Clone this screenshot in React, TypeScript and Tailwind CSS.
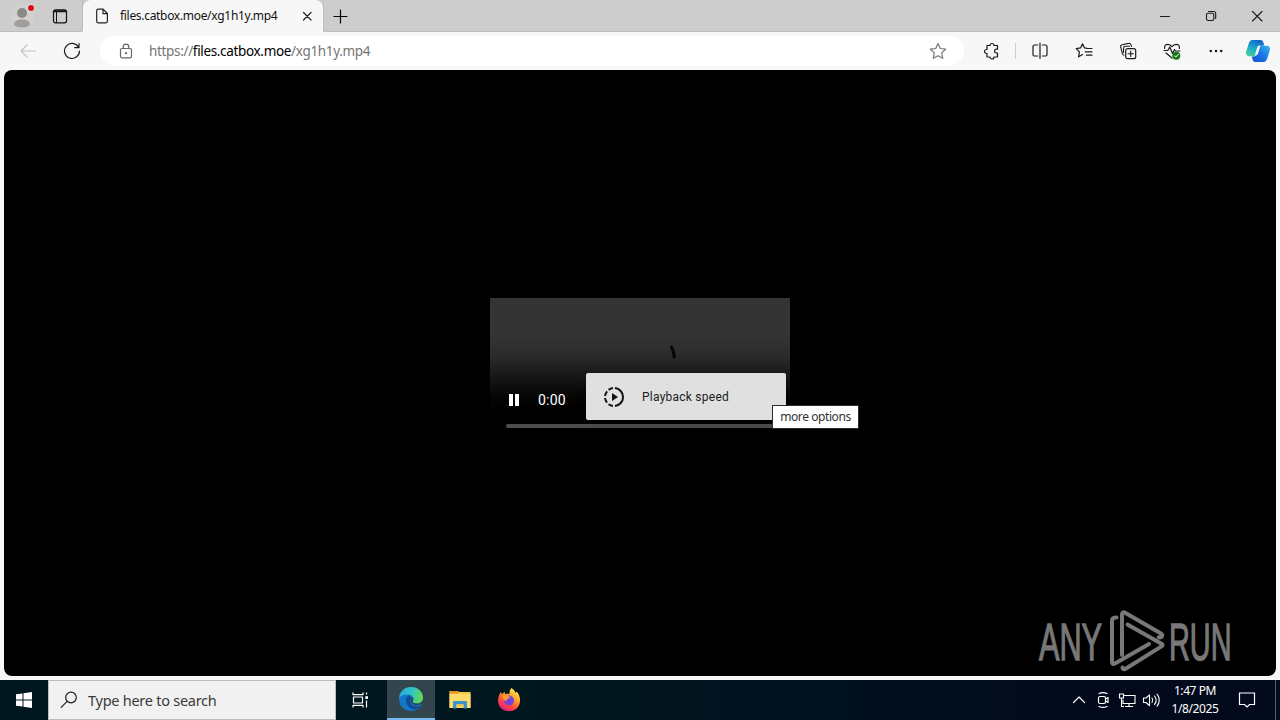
import type { ReactNode } from 'react';

type IconProps = {
  size?: number;
  className?: string;
  children: ReactNode;
};

// stroke icon, drawn 1:1 on a size x size grid
function Icon({ size = 18, className = 'text-[#1b1b1b]', children }: IconProps) {
  return (
    <svg
      width={size}
      height={size}
      viewBox={`0 0 ${size} ${size}`}
      fill="none"
      stroke="currentColor"
      strokeWidth="1.2"
      strokeLinecap="round"
      strokeLinejoin="round"
      className={`shrink-0 ${className}`}
    >
      {children}
    </svg>
  );
}

function Slot({ className = 'w-11', children }: { className?: string; children: ReactNode }) {
  return <div className={`flex h-full shrink-0 items-center justify-center ${className}`}>{children}</div>;
}

function TabStrip() {
  return (
    <div className="flex h-8 shrink-0 bg-[#cdcdcd]">
      <div className="flex w-[83px] items-center rounded-br border-b border-r border-[#bdbdbd]">
        <svg width="26" height="26" viewBox="0 0 26 26" className="ml-[9px]">
          <circle cx="13" cy="13" r="12" fill="#d3d1cf" />
          <circle cx="13" cy="10" r="5" fill="#8b8987" />
          <path d="M5 21.5c0-3 3-5 8-5s8 2 8 5c-2 2.4-4.500 3-8 3s-6-.6-8-3z" fill="#a09e9c" />
          <circle cx="22" cy="5" r="4.200" fill="#dcdcdc" />
          <circle cx="22" cy="5" r="3" fill="#d90f17" />
        </svg>
        <Icon size={16} className="ml-[17px] text-[#111]">
          <rect x="1.500" y="1.800" width="13" height="13" rx="2" />
          <path d="M2.500 3.200h11" strokeWidth="2" />
          <path d="M4.500 4v10.500" strokeWidth="1" />
        </Icon>
      </div>
      <div className="flex w-[240px] items-center rounded-t-lg bg-[#f7f7f7]">
        <Icon size={16} className="ml-[11px] text-[#222]">
          <path d="M4.200 1.200h4.900l4.300 4.300v7.800a1.500 1.500 0 0 1-1.500 1.500H4.200a1.500 1.500 0 0 1-1.500-1.500V2.700a1.500 1.500 0 0 1 1.500-1.500zM9 1.500v4.200h4.200" />
        </Icon>
        <span className="ml-[10px] w-[180px] whitespace-nowrap text-xs tracking-[-0.026em] text-[#111]">
          files.catbox.moe/xg1h1y.mp4
        </span>
        <Icon size={12} className="ml-[1px] text-[#222]">
          <path d="M2.500 2.500l7.500 7.500M10 2.500l-7.500 7.500" />
        </Icon>
      </div>
      <div className="flex flex-1 items-center rounded-bl border-b border-l border-[#bdbdbd]">
        <Icon size={16} className="ml-[8px]">
          <path d="M8.500 2v13M2 8.500h13" />
        </Icon>
        <div className="ml-auto flex h-full">
          <Slot className="w-[46px]">
            <Icon size={12}>
              <path d="M1.500 6.500h9" strokeWidth="1" />
            </Icon>
          </Slot>
          <Slot className="w-[46px]">
            <Icon size={12}>
              <rect x="1.500" y="3.200" width="7.300" height="7.300" rx="1.500" strokeWidth="1.100" />
              <path d="M3.500 1.500h5.200a2 2 0 0 1 2 2v5" strokeWidth="1.100" />
            </Icon>
          </Slot>
          <Slot className="w-[46px]">
            <Icon size={12}>
              <path d="M1.500 1.500l9.500 9.500M11 1.500L1.500 11" strokeWidth="1.100" />
            </Icon>
          </Slot>
        </div>
      </div>
    </div>
  );
}

function Copilot() {
  return (
    <svg width="26" height="24" viewBox="0 0 26 24">
      <defs>
        <linearGradient id="cpA" x1="0" y1="1" x2="0.600" y2="0">
          <stop offset="0" stopColor="#58d08a" />
          <stop offset="0.450" stopColor="#21b3c6" />
          <stop offset="1" stopColor="#1268cf" />
        </linearGradient>
        <linearGradient id="cpB" x1="0" y1="1" x2="1" y2="0">
          <stop offset="0" stopColor="#1450d8" />
          <stop offset="0.500" stopColor="#1a75e6" />
          <stop offset="1" stopColor="#35b7ee" />
        </linearGradient>
      </defs>
      <path d="M7.500 1h8c2 0 2.500 1.200 3 3l.8 2.500c-3-.3-4.500.5-5.300 3L12 15c-.6 1.700-1.700 2.200-3.300 2.200H4.500c-3 0-4-2.200-3.200-5l2.200-7C4.300 2.500 5.400 1 7.500 1z" fill="url(#cpA)" />
      <path d="M18.500 23h-8c-2 0-2.500-1.200-3-3l-.8-2.500c3 .3 4.500-.5 5.300-3L14 9c.6-1.700 1.700-2.200 3.300-2.200h4.200c3 0 4 2.200 3.200 5l-2.200 7c-.8 2.700-1.900 4.200-4 4.200z" fill="url(#cpB)" />
      <path d="M12.200 8.300c.5-1.300 1.500-1.700 3.300-1.700l-2.300 7.500c-.6 2-1.500 2.700-3.500 2.700z" fill="#f7f7f7" />
    </svg>
  );
}

function Toolbar() {
  return (
    <div className="flex h-[38px] shrink-0 items-center bg-[#f7f7f7]">
      <Slot className="w-[56px]">
        <Icon className="text-[#c4c4c4]">
          <path d="M16.500 9H2M8 3L2 9l6 6" />
        </Icon>
      </Slot>
      <Slot className="w-8">
        <Icon>
          <path d="M15.500 5.200A7.500 7.500 0 1 0 16.500 9M16 1.500v4.200h-4.300" />
        </Icon>
      </Slot>
      <div className="ml-3 flex h-[30px] w-[864px] items-center rounded-full bg-white">
        <Icon size={16} className="ml-[18px] text-[#666]">
          <rect x="2.500" y="5.500" width="11" height="9.300" rx="1.500" />
          <path d="M5.200 5.300V4a2.800 2.800 0 0 1 5.600 0v1.300" />
          <circle cx="8" cy="10.200" r="0.500" fill="currentColor" />
        </Icon>
        <span className="ml-[15px] whitespace-nowrap text-[13.5px] tracking-[-0.025em] text-[#747474]">
          https://<span className="text-black">files.catbox.moe</span>/xg1h1y.mp4
        </span>
        <Icon className="ml-auto mr-[17px] text-[#777]">
          <path d="M9 1.500l2.300 5 5.300.7-3.900 3.700 1 5.400L9 13.700l-4.700 2.600 1-5.400L1.400 7.200l5.300-.7z" />
        </Icon>
      </div>
      <Slot className="ml-[5px] w-11">
        <Icon>
          <path d="M5 3.500h3a2 2 0 0 1 4 0h3.500v3.700h-1a1.900 1.900 0 0 0 0 3.800h1v4H12a2 2 0 0 1-4 0H5v-3.500H4.500a2 2 0 0 1 0-4H5z" />
        </Icon>
      </Slot>
      <div className="mx-[2px] h-4 w-px bg-[#cfcfcf]" />
      <Slot className="w-11 pr-px">
        <Icon>
          <path d="M6.700 3H3.500A1.500 1.500 0 0 0 2 4.500v8A1.500 1.500 0 0 0 3.500 14h3.200M11.300 3h3.200A1.500 1.500 0 0 1 16 4.500v8a1.500 1.500 0 0 1-1.500 1.500h-3.200M9 1v15.500" />
        </Icon>
      </Slot>
      <Slot>
        <Icon>
          <path d="M12 6.300l-2.500-.4L7.500 1.800 5.600 5.900l-4.400.7 3.200 3.200-.8 5 3.900-2.300M12 6.500h5M10.200 9.800H17M11.500 13.200H17" />
        </Icon>
      </Slot>
      <Slot>
        <Icon>
          <rect x="6.700" y="6.700" width="10" height="10" rx="2" />
          <path d="M11.700 9v5.400M9 11.700h5.400M4.800 13.200a2 2 0 0 1-1.300-1.400L1.700 5.200A2 2 0 0 1 3.100 2.800L9.500 1.400a2 2 0 0 1 2.400 1.300l.6 1.700M4.500 10.500v-4a2 2 0 0 1 2-2.200h4" strokeWidth="1.100" />
        </Icon>
      </Slot>
      <Slot>
        <Icon>
          <path d="M1.700 6.500C1 4 2.700 2.300 4.900 2.300c2 0 3.100 1 4.100 2.300 1-1.300 2.100-2.300 4.100-2.300 2.200 0 3.900 1.700 3.200 4.200M1 8.500h3.800l2-3.500L9.500 11.500l2-4 1 1.500H17M3 11l6 5" />
          <circle cx="13.300" cy="13.700" r="4" fill="#187a18" stroke="none" />
          <path d="M11.500 14l1.300 1 2.500-2.600" stroke="#fff" strokeWidth="1" />
        </Icon>
      </Slot>
      <Slot>
        <Icon>
          <g fill="currentColor" stroke="none">
            <circle cx="3.800" cy="9" r="1.300" />
            <circle cx="9" cy="9" r="1.300" />
            <circle cx="14.200" cy="9" r="1.300" />
          </g>
        </Icon>
      </Slot>
      <Slot className="w-10">
        <Copilot />
      </Slot>
    </div>
  );
}

function Player() {
  return (
    <div className="relative flex h-[150px] w-[300px] flex-col bg-linear-to-b from-[#343434] from-25% via-[#2c2c2c] via-38% to-black to-85%">
      <svg width="12" height="18" viewBox="0 0 12 18" className="absolute left-[177px] top-[45px]">
        <path d="M4 3c2 3.500 3 7 3.500 12" stroke="#050505" strokeWidth="3" fill="none" />
      </svg>
      <div className="mt-[92px] flex h-5 items-center pl-[19px]">
        <div className="flex gap-[2px]">
          <div className="h-3 w-1 bg-white" />
          <div className="h-3 w-1 bg-white" />
        </div>
        <span className="ml-[19px] font-['Roboto',sans-serif] text-sm tracking-[0.015em] text-white">0:00</span>
      </div>
      <div className="ml-4 mt-[14px] h-1 w-[268px] rounded-full bg-[#4d4d4d]" />

      <div className="absolute left-24 top-[75px] flex h-[47px] w-[200px] items-center rounded-[2px] bg-[#e0e0e0] shadow-lg">
        <svg width="24" height="24" viewBox="0 0 24 24" className="ml-4" fill="none" stroke="#111" strokeWidth="2">
          <path d="M13 3.050a9 9 0 0 1 0 17.900" />
          <path d="M11 3.050a9 9 0 0 0-4.400 1.800M5.100 6.300A9 9 0 0 0 3.050 11M3.050 13a9 9 0 0 0 2 4.700M6.600 19.200A9 9 0 0 0 11 20.950" />
          <path d="M10 8v8l6-4z" fill="#111" stroke="none" />
        </svg>
        <span className="ml-4 font-['Roboto',sans-serif] text-xs tracking-[0.020em] text-[#1c1c1c]">
          Playback speed
        </span>
      </div>
      <div className="absolute left-[282px] top-[107px] flex h-[24px] w-[87px] items-center justify-center whitespace-nowrap border border-[#2b2b2b] bg-white text-xs tracking-[-0.035em] text-[#333]">
        more options
      </div>
    </div>
  );
}

function Watermark() {
  return (
    <svg width="212" height="70" viewBox="0 0 212 70" className="absolute bottom-0 right-[29px]">
      <g
        fill="#787878"
        stroke="#787878"
        strokeWidth="1.300"
        fontFamily="'Liberation Sans', sans-serif"
        fontSize="52"
      >
        <text transform="translate(4 53.500) scale(0.590 1)">ANY</text>
        <text transform="translate(134 53.500) scale(0.555 1)">RUN</text>
      </g>
      <g fill="none" stroke="#787878" strokeWidth="4" strokeLinejoin="round" strokeLinecap="round">
        <path d="M81.500 11.500c-3 0-4.500 1-4.500 3v41.500c0 2 1.200 2.600 3 1.600L114 38" />
        <path d="M87 49V8.500c0-2.300 1.500-2.700 3.500-1.500L126 27.500c2.300 1.500 1 4.500-2.300 3.700" />
        <path d="M92.500 18.500l34 19.200c1.500.8 1.500 1.800 0 2.700L91 62.500c-2 1.200-3.500.8-3.500-1" />
      </g>
    </svg>
  );
}

function Edge() {
  return (
    <svg width="26" height="26" viewBox="0 0 26 26">
      <defs>
        <linearGradient id="edgeTop" x1="0" y1="0.300" x2="1" y2="0.500">
          <stop offset="0" stopColor="#26a5dc" />
          <stop offset="0.500" stopColor="#31c4c9" />
          <stop offset="1" stopColor="#68d94c" />
        </linearGradient>
      </defs>
      <circle cx="13" cy="13" r="12" fill="#1378c8" />
      <path d="M1 12.500C1.500 5.500 6.500 1 13 1c7 0 12 5 12 10.500 0 4-3 6-6.500 6-3 0-4.500-1.200-3.700-2.500 1.700-2.500.2-6.500-4.300-6.500C6 8.500 2 10 1 12.500z" fill="url(#edgeTop)" />
      <path d="M10.800 9.300C8.300 11 7.500 14 8.500 17c1.200 4 5 6.500 8.500 6.300 2.600-.1 5-1.800 6.500-4-4 2.200-8.500 1.200-10.500-1.500-1.400-2-1.200-4 .3-5.200-.1-1.500-1-2.700-2.500-3.300z" fill="#124b94" />
      <path d="M14.800 15c.5-1 .7-2.200.1-3.500-.9.200-2 1.100-2.100 2.700-.2 2.800 2.500 5 5.700 5 2.800 0 5-.6 6.500-2.400v-2.300c-2 2.500-4 3-6.500 3-3 0-4.500-1.200-3.700-2.500z" fill="#32454d" />
    </svg>
  );
}

function Explorer() {
  return (
    <svg width="24" height="22" viewBox="0 0 24 22">
      <path d="M1.500 2h8l2 1h11v16h-21z" fill="#f6c545" />
      <path d="M1.500 2h8l1 2.500h-9z" fill="#de9420" />
      <path d="M1.500 5h21v14h-21z" fill="#ffdb6e" />
      <path d="M5 19.500v-6.300c0-.8.500-1.200 1.200-1.200h11.600c.7 0 1.200.4 1.200 1.200v6.300h-3.500V15.500h-7v4z" fill="#3c93c9" />
      <path d="M8.500 15.500h7V18h-7z" fill="#f5c64b" />
    </svg>
  );
}

function Firefox() {
  return (
    <svg width="24" height="26" viewBox="0 0 24 26">
      <defs>
        <linearGradient id="fox" x1="0.800" y1="0" x2="0.200" y2="1">
          <stop offset="0" stopColor="#fff44f" />
          <stop offset="0.350" stopColor="#ffa62b" />
          <stop offset="0.650" stopColor="#ff4b3e" />
          <stop offset="1" stopColor="#e31587" />
        </linearGradient>
      </defs>
      <path d="M14.500 1c2.500 1.700 3.500 3.500 4 5l1.300-1.500C22 7.500 23.300 10.500 23 14c-.4 6-5 10.300-11 10.300S1 20 1 13.500C1 10 2.500 7 4 4.700l.7 2.600 3-2.600.3 2.500c1.500-.5 3-.5 4.500 0C12.300 4.500 13 2.500 14.500 1z" fill="url(#fox)" />
      <circle cx="12" cy="13.500" r="5" fill="#7542d9" />
      <path d="M5 8.500c2-1 4-.8 5.500.5l3 .8c-.5 1.300-1.700 1.700-3 1.900-.8 1-.5 1.700-1.500 2.300-2-.5-3.500-2.500-4-5.500z" fill="#ff9a2e" />
    </svg>
  );
}

function Taskbar() {
  return (
    <div className="flex h-10 shrink-0 items-center bg-linear-to-r from-[#00171f] from-40% via-[#00101d] via-65% to-[#020a1c] to-85%">
      <Slot className="w-12">
        <svg width="16" height="16" viewBox="0 0 16 16" fill="#fff">
          <path d="M0 2.300L6.500 1.400v6.100H0zM7.500 1.200L16 0v7.500H7.500zM0 8.500h6.500v6.100L0 13.700zM7.500 8.500H16V16l-8.500-1.200z" />
        </svg>
      </Slot>
      <div className="flex h-full w-[288px] items-center border border-[#bcbcbc] bg-[#f1f1f1]">
        <Icon className="ml-[11px] text-[#222]">
          <circle cx="11" cy="6.500" r="5.300" />
          <path d="M7.200 10.300L1.200 16.300" />
        </Icon>
        <span className="ml-[10px] pt-0.5 text-[14.5px] tracking-[-0.018em] text-[#3a3a3a]">Type here to search</span>
      </div>
      <Slot className="w-[51px] pr-[3px]">
        <Icon className="text-white">
          <path d="M2 1.500v2.200h10V1.500M2 16.500v-2.200h10v2.200M2.500 6h9v6h-9zM15.500 1.500v2M15.500 9.500v7" strokeLinecap="butt" />
          <path d="M14.300 5.200h2.700v2.700h-2.700z" fill="currentColor" stroke="none" />
        </Icon>
      </Slot>
      <Slot className="w-12 border-b-2 border-[#76b9ed] bg-[#33464e]">
        <Edge />
      </Slot>
      <Slot className="w-[49px]">
        <Explorer />
      </Slot>
      <Slot className="w-[49px]">
        <Firefox />
      </Slot>
      <div className="ml-auto flex h-full text-white">
        <Slot className="w-6">
          <Icon className="text-white">
            <path d="M3.500 11.500L9 6l5.500 5.500" />
          </Icon>
        </Slot>
        <Slot className="w-6">
          <Icon className="text-white">
            <rect x="4.500" y="5.500" width="7" height="7" rx="1.500" />
            <path d="M11.500 8l2.500-1.500v5L11.500 10M5 2.500c2.500-1.200 5.500-1.200 8 0M5 15.500c2.500 1.200 5.500 1.200 8 0" />
          </Icon>
        </Slot>
        <Slot className="w-6">
          <Icon className="text-white">
            <path d="M6.500 4.500H17v8H5V9M11 12.500v3M7.500 15.500h7M1.500 3h4v4h-4zM3.500 7v8.500h2" strokeWidth="1.100" strokeLinejoin="miter" />
          </Icon>
        </Slot>
        <Slot className="w-6">
          <Icon className="text-white">
            <path d="M1.500 7v4.500H4l3.500 3.200V3.800L4 7zM10 7c1 1.500 1 3 0 4.500M12.500 5c2 2.500 2 6 0 8.500M15 3.200c3 3.500 3 8.500 0 12" strokeWidth="1.100" />
          </Icon>
        </Slot>
        <div className="flex w-16 flex-col items-center pt-[2px] text-xs leading-[18px] tracking-[-0.035em]">
          <span className="whitespace-nowrap">1:47 PM</span>
          <span>1/8/2025</span>
        </div>
        <Slot className="w-10">
          <Icon className="text-white">
            <path d="M1.500 2h15v11.500h-5L9 16l-2.500-2.500h-5z" strokeLinejoin="miter" />
          </Icon>
        </Slot>
        <div className="ml-2 mr-1 h-full w-px bg-[#55606e]" />
      </div>
    </div>
  );
}

export default function App() {
  return (
    <div className="flex h-[720px] w-[1280px] flex-col overflow-hidden bg-[#f7f7f7] font-['Noto_Sans','Open_Sans',sans-serif]">
      <TabStrip />
      <Toolbar />
      <div className="relative mx-1 mb-1 flex flex-1 items-center justify-center rounded-lg bg-black">
        <Player />
        <Watermark />
      </div>
      <Taskbar />
    </div>
  );
}
